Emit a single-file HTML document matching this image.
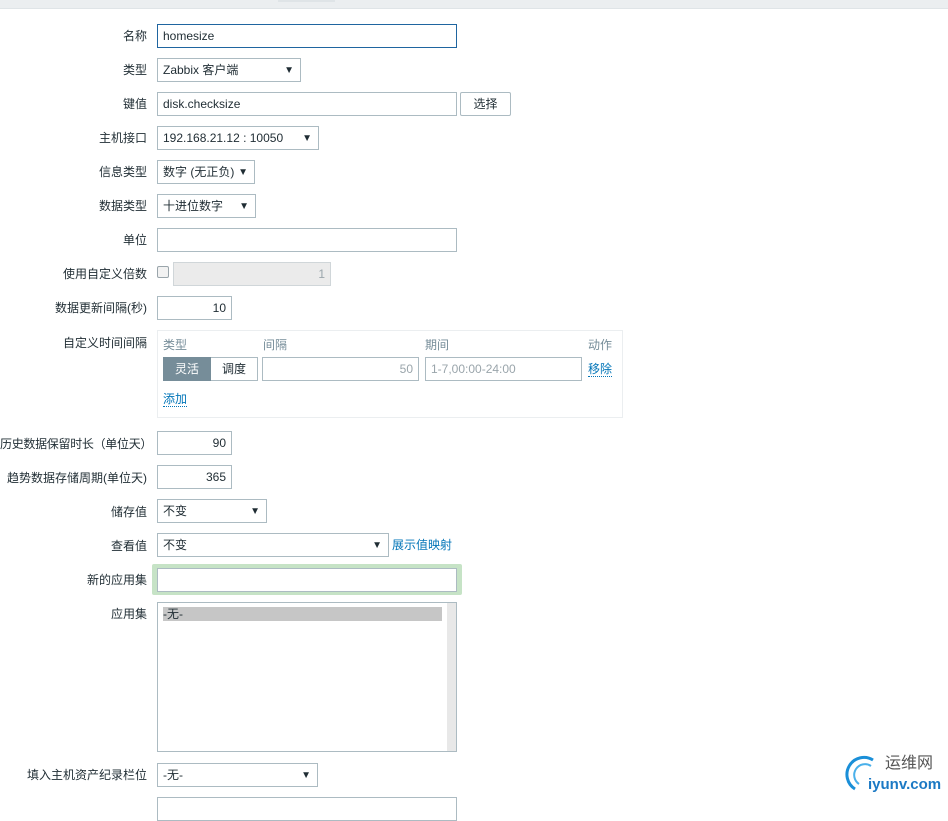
<!DOCTYPE html>
<html><head><meta charset="utf-8"><style>
body{margin:0;width:948px;height:799px;position:relative;overflow:hidden;background:#fff;font-family:"Liberation Sans","Noto Sans CJK SC",sans-serif;font-size:12px;color:#1f2c33}
.a{position:absolute;box-sizing:border-box}
.l{position:absolute;right:801px;white-space:nowrap;line-height:14px}
.f{position:absolute;box-sizing:border-box;border:1px solid #acbbc2;background:#fff;height:24px;line-height:22px;padding:0 5px;white-space:nowrap}
.r{text-align:right}
.s::after{content:"▼";position:absolute;right:6px;top:1px;font-size:10px;line-height:22px}
.g{color:#768d99}
.lk{color:#0275b8;border-bottom:1px dotted #0275b8;line-height:14px}
</style></head><body>
<div class="a" style="left:0;top:0;width:948px;height:9px;background:#ebeef0;border-bottom:1px solid #dfe4e7"></div>
<div class="a" style="left:278px;top:0;width:57px;height:2px;background:#dfe4e7"></div>

<div class="l" style="top:29px">名称</div>
<div class="f" style="left:157px;top:24px;width:300px;border-color:#1f65a0">homesize</div>
<div class="l" style="top:63px">类型</div>
<div class="f s" style="left:157px;top:58px;width:144px">Zabbix 客户端</div>
<div class="l" style="top:97px">键值</div>
<div class="f" style="left:157px;top:92px;width:300px">disk.checksize</div>
<div class="f" style="left:460px;top:92px;width:51px;text-align:center;border-radius:2px">选择</div>
<div class="l" style="top:131px">主机接口</div>
<div class="f s" style="left:157px;top:126px;width:162px">192.168.21.12 : 10050</div>
<div class="l" style="top:165px">信息类型</div>
<div class="f s" style="left:157px;top:160px;width:98px">数字 (无正负)</div>
<div class="l" style="top:199px">数据类型</div>
<div class="f s" style="left:157px;top:194px;width:99px">十进位数字</div>
<div class="l" style="top:233px">单位</div>
<div class="f" style="left:157px;top:228px;width:300px"></div>
<div class="l" style="top:267px">使用自定义倍数</div>
<div class="a" style="left:157px;top:266px;width:12px;height:12px;border:1px solid #9aa5ab;border-radius:2px;background:#f2f2f2"></div>
<div class="f r" style="left:173px;top:262px;width:158px;background:#ebebeb;color:#9aa5ab;border-color:#d0d6d9">1</div>
<div class="l" style="top:301px">数据更新间隔(秒)</div>
<div class="f r" style="left:157px;top:296px;width:75px">10</div>
<div class="l" style="top:336px">自定义时间间隔</div>
<div class="a" style="left:157px;top:330px;width:466px;height:88px;border:1px solid #ebeef0"></div>
<div class="a g" style="left:163px;top:336px">类型</div>
<div class="a g" style="left:263px;top:336px">间隔</div>
<div class="a g" style="left:425px;top:336px">期间</div>
<div class="a g" style="left:588px;top:336px">动作</div>
<div class="a" style="left:163px;top:357px;width:48px;height:24px;background:#768d99;color:#fff;text-align:center;line-height:24px">灵活</div>
<div class="a" style="left:211px;top:357px;width:47px;height:24px;border:1px solid #acbbc2;border-left:0;text-align:center;line-height:22px">调度</div>
<div class="f r" style="left:262px;top:357px;width:157px;color:#9aa5ab">50</div>
<div class="f" style="left:425px;top:357px;width:157px;color:#9aa5ab">1-7,00:00-24:00</div>
<div class="a lk" style="left:588px;top:362px">移除</div>
<div class="a lk" style="left:163px;top:392px">添加</div>
<div class="a" style="left:0;top:437px;white-space:nowrap;line-height:14px;letter-spacing:-0.3px">历史数据保留时长（单位天）</div>
<div class="f r" style="left:157px;top:431px;width:75px">90</div>
<div class="l" style="top:471px">趋势数据存储周期(单位天)</div>
<div class="f r" style="left:157px;top:465px;width:75px">365</div>
<div class="l" style="top:505px">储存值</div>
<div class="f s" style="left:157px;top:499px;width:110px">不变</div>
<div class="l" style="top:539px">查看值</div>
<div class="f s" style="left:157px;top:533px;width:232px">不变</div>
<div class="a" style="left:392px;top:538px;color:#0275b8;line-height:14px">展示值映射</div>
<div class="l" style="top:573px">新的应用集</div>
<div class="a" style="left:152px;top:564px;width:310px;height:31px;background:#c6e3c6;border-radius:2px"></div>
<div class="f" style="left:157px;top:568px;width:300px"></div>
<div class="l" style="top:607px">应用集</div>
<div class="a" style="left:157px;top:602px;width:300px;height:150px;border:1px solid #acbbc2"></div>
<div class="a" style="left:163px;top:607px;width:279px;height:14px;background:#c6c6c6;line-height:14px">-无-</div>
<div class="a" style="left:447px;top:603px;width:9px;height:148px;background:#e8e8e8"></div>
<div class="l" style="top:768px">填入主机资产纪录栏位</div>
<div class="f s" style="left:157px;top:763px;width:161px">-无-</div>
<div class="f" style="left:157px;top:797px;width:300px"></div>
<svg class="a" style="left:843px;top:752px" width="40" height="42" viewBox="0 0 40 42"><path d="M30 8 A16 16 0 1 0 12 37" fill="none" stroke="#1a8fd8" stroke-width="3"/><path d="M28 14 A10 10 0 1 0 16 32" fill="none" stroke="#4ab0ea" stroke-width="2"/></svg>
<div class="a" style="left:885px;top:755px;font-size:16px;color:#555;line-height:18px">运维网</div>
<div class="a" style="left:868px;top:776px;font-size:15px;font-weight:bold;color:#1b79c4;line-height:18px">iyunv.com</div>
</body></html>
